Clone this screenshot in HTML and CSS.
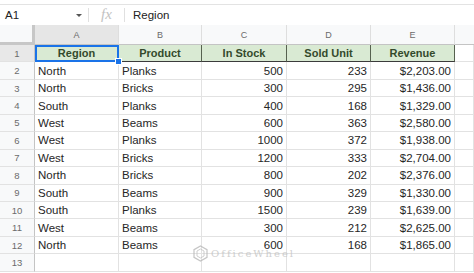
FILE: index.html
```html
<!DOCTYPE html>
<html lang="en">
<head>
    <meta charset="UTF-8">
    <title>Sheet</title>
    <link rel="stylesheet" href="styles.css">
</head>
<body>
    <div class="topstrip"></div>
    <div class="formula-bar">
        <div class="name-box">A1<span class="caret"></span></div>
        <div class="fx">fx</div>
        <div class="formula">Region</div>
    </div>

    <div class="sheet">
        <div class="corner"></div>
        <div class="col-head active">A</div>
        <div class="col-head">B</div>
        <div class="col-head">C</div>
        <div class="col-head">D</div>
        <div class="col-head">E</div>
        <div class="col-head blank"></div>

        <div class="row-num active">1</div>
        <div class="cell th selected">Region<span class="handle"></span></div>
        <div class="cell th">Product</div>
        <div class="cell th">In Stock</div>
        <div class="cell th">Sold Unit</div>
        <div class="cell th">Revenue</div>
        <div class="cell"></div>

        <div class="row-num">2</div><div class="cell">North</div><div class="cell">Planks</div><div class="cell num">500</div><div class="cell num">233</div><div class="cell num">$2,203.00</div><div class="cell"></div>
        <div class="row-num">3</div><div class="cell">North</div><div class="cell">Bricks</div><div class="cell num">300</div><div class="cell num">295</div><div class="cell num">$1,436.00</div><div class="cell"></div>
        <div class="row-num">4</div><div class="cell">South</div><div class="cell">Planks</div><div class="cell num">400</div><div class="cell num">168</div><div class="cell num">$1,329.00</div><div class="cell"></div>
        <div class="row-num">5</div><div class="cell">West</div><div class="cell">Beams</div><div class="cell num">600</div><div class="cell num">363</div><div class="cell num">$2,580.00</div><div class="cell"></div>
        <div class="row-num">6</div><div class="cell">West</div><div class="cell">Planks</div><div class="cell num">1000</div><div class="cell num">372</div><div class="cell num">$1,938.00</div><div class="cell"></div>
        <div class="row-num">7</div><div class="cell">West</div><div class="cell">Bricks</div><div class="cell num">1200</div><div class="cell num">333</div><div class="cell num">$2,704.00</div><div class="cell"></div>
        <div class="row-num">8</div><div class="cell">North</div><div class="cell">Bricks</div><div class="cell num">800</div><div class="cell num">202</div><div class="cell num">$2,376.00</div><div class="cell"></div>
        <div class="row-num">9</div><div class="cell">South</div><div class="cell">Beams</div><div class="cell num">900</div><div class="cell num">329</div><div class="cell num">$1,330.00</div><div class="cell"></div>
        <div class="row-num">10</div><div class="cell">South</div><div class="cell">Planks</div><div class="cell num">1500</div><div class="cell num">239</div><div class="cell num">$1,639.00</div><div class="cell"></div>
        <div class="row-num">11</div><div class="cell">West</div><div class="cell">Beams</div><div class="cell num">300</div><div class="cell num">212</div><div class="cell num">$2,625.00</div><div class="cell"></div>
        <div class="row-num">12</div><div class="cell">North</div><div class="cell">Beams</div><div class="cell num">600</div><div class="cell num">168</div><div class="cell num">$1,865.00</div><div class="cell"></div>
        <div class="row-num">13</div><div class="cell"></div><div class="cell"></div><div class="cell"></div><div class="cell"></div><div class="cell"></div><div class="cell"></div>

        <div class="watermark">
            <svg width="15" height="17" viewBox="0 0 15 17">
                <path d="M7.5 1 L14 4.7 V12.3 L7.5 16 L1 12.3 V4.7 Z" fill="none" stroke="#b8b8b8" stroke-width="1.2"/>
                <path d="M7.5 4 L11 6 V11 L7.5 13 L4 11 V6 Z" fill="none" stroke="#c4c4c4" stroke-width="1"/>
            </svg>
            <span>OfficeWheel</span>
        </div>
    </div>
</body>
</html>
```

FILE: styles.css
```css
body {
    margin: 0;
    background: #fff;
    font-family: "Liberation Sans", Arial, sans-serif;
    color: #222;
    overflow: hidden;
}

.topstrip {
    height: 4px;
    border-bottom: 1px solid #e3e3e3;
}

.formula-bar {
    display: flex;
    align-items: center;
    height: 20px;
    font-size: 11.5px;
}

.name-box {
    width: 78px;
    padding-left: 5px;
    display: flex;
    align-items: center;
    justify-content: space-between;
    padding-right: 5px;
    border-right: 1px solid #e0e0e0;
    height: 14px;
    line-height: 14px;
}

.caret {
    width: 0;
    height: 0;
    border-left: 3px solid transparent;
    border-right: 3px solid transparent;
    border-top: 3px solid #555;
    margin-right: 1px;
}

.fx {
    width: 35px;
    text-align: center;
    font-family: "Liberation Serif", serif;
    font-style: italic;
    font-size: 15px;
    color: #c2c2c2;
    border-right: 1px solid #e0e0e0;
    height: 14px;
    line-height: 13px;
}

.formula {
    padding-left: 8px;
}

.sheet {
    position: relative;
    display: grid;
    grid-template-columns: 35px 84px 83px 85px 84px 84px 1fr;
    grid-template-rows: 20px repeat(13, 17.45px);
    font-size: 11.5px;
}

.corner {
    background: #f8f9fa;
    border-right: 3px solid #c7c7c7;
    border-bottom: 3px solid #c7c7c7;
    box-sizing: border-box;
}

.col-head {
    background: #f8f9fa;
    color: #6b6b6b;
    font-size: 9px;
    display: flex;
    align-items: center;
    justify-content: center;
    border-right: 1px solid #dedede;
    border-bottom: 1px solid #c4c4c4;
    box-sizing: border-box;
}

.col-head.active {
    background: #e6e6e6;
}

.col-head.blank {
    border-right: none;
}

.row-num {
    background: #f8f9fa;
    color: #6b6b6b;
    font-size: 9.5px;
    display: flex;
    align-items: center;
    justify-content: center;
    border-right: 1px solid #c4c4c4;
    border-bottom: 1px solid #e2e2e2;
    box-sizing: border-box;
}

.row-num.active {
    background: #e8e8e8;
}

.cell {
    display: flex;
    align-items: center;
    padding: 0 3px;
    border-right: 1px solid #e2e2e2;
    border-bottom: 1px solid #e2e2e2;
    box-sizing: border-box;
    white-space: nowrap;
    color: #262626;
}

.cell.num {
    justify-content: flex-end;
}

.cell.th {
    background: #d9ead3;
    font-weight: bold;
    font-size: 11px;
    color: #344a2c;
    justify-content: center;
    border-right: 1px solid #56614f;
    border-bottom: 1px solid #3b3b3b;
}

.cell.selected {
    position: relative;
    outline: 2px solid #1a73e8;
    outline-offset: -2px;
}

.handle {
    position: absolute;
    right: -4px;
    bottom: -4px;
    width: 5px;
    height: 5px;
    background: #1a73e8;
    border: 1px solid #fff;
    z-index: 2;
}

.watermark {
    position: absolute;
    left: 193px;
    top: 220px;
    display: flex;
    align-items: center;
    gap: 3px;
    opacity: 0.8;
}

.watermark span {
    font-family: "DejaVu Serif", serif;
    font-size: 10px;
    letter-spacing: 2px;
    color: #c4c4c4;
}
```
